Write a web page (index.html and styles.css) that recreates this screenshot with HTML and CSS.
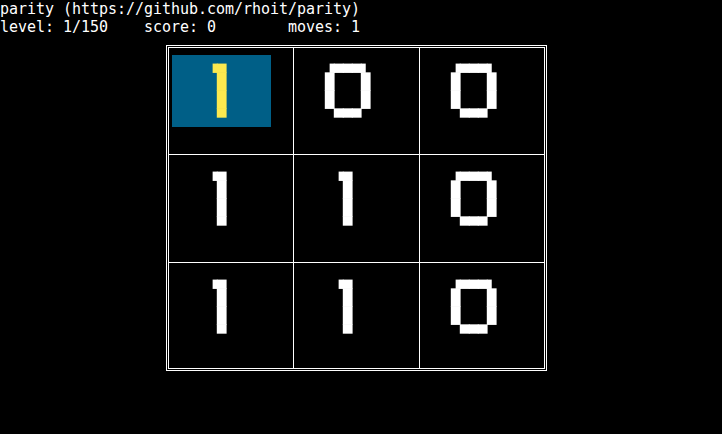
FILE: index.html
```html
<!DOCTYPE html>
<html lang="en">
<head>
<meta charset="utf-8">
<title>parity</title>
<link rel="stylesheet" href="styles.css">
</head>
<body>
<pre class="status">parity (https://github.com/rhoit/parity)
level: 1/150    score: 0        moves: 1</pre>
<div class="board">
  <div class="cell c1 r1"><div class="box sel"><pre class="digit">    ▗▄
     █
     █
     ▀</pre></div></div>
  <div class="cell r1"><div class="box"><pre class="digit">   ▗▄▄▄▖
   █   █
   █   █
    ▀▀▀</pre></div></div>
  <div class="cell r1"><div class="box"><pre class="digit">   ▗▄▄▄▖
   █   █
   █   █
    ▀▀▀</pre></div></div>
  <div class="cell c1"><div class="box"><pre class="digit">    ▗▄
     █
     █
     ▀</pre></div></div>
  <div class="cell"><div class="box"><pre class="digit">    ▗▄
     █
     █
     ▀</pre></div></div>
  <div class="cell"><div class="box"><pre class="digit">   ▗▄▄▄▖
   █   █
   █   █
    ▀▀▀</pre></div></div>
  <div class="cell c1"><div class="box"><pre class="digit">    ▗▄
     █
     █
     ▀</pre></div></div>
  <div class="cell"><div class="box"><pre class="digit">    ▗▄
     █
     █
     ▀</pre></div></div>
  <div class="cell"><div class="box"><pre class="digit">   ▗▄▄▄▖
   █   █
   █   █
    ▀▀▀</pre></div></div>
</div>
</body>
</html>
```

FILE: styles.css
```css
html, body {
  margin: 0;
  padding: 0;
  background: #000;
  color: #fff;
}

body {
  width: 722px;
  height: 434px;
  overflow: hidden;
  font-family: "DejaVu Sans Mono", monospace;
  font-size: 15px;
  letter-spacing: -0.0317px;
  line-height: 18px;
}

.status {
  margin: 0;
  font: inherit;
  color: #fff;
}

.board {
  margin: 9px 0 0 166px;
  width: max-content;
  display: grid;
  grid-template-columns: 124px 125px 124px;
  grid-template-rows: 106px 107px 105px;
  gap: 1px;
  border: 3px double #fff;
  background: #fff;
  background-clip: padding-box;
}

.cell {
  background: #000;
  padding: 8px 0 0 4px;
}

.cell.r1 {
  padding-top: 7px;
}

.cell.c1 {
  padding-left: 3px;
}

.box {
  width: 99px;
  height: 72px;
  overflow: hidden;
}

.box.sel {
  background: #005f87;
  color: #fce94f;
}

.digit {
  margin: 0;
  height: 72px;
  font-family: "DejaVu Sans Mono", monospace;
  font-size: 15.6px;
  line-height: 18px;
  letter-spacing: -0.392px;
  text-rendering: geometricPrecision;
  will-change: transform;
  color: inherit;
}
```
